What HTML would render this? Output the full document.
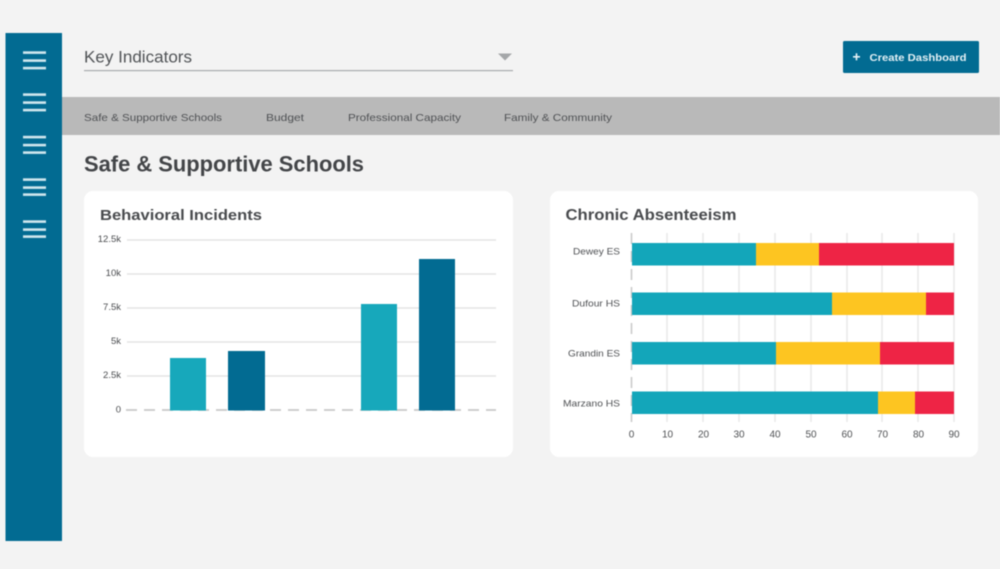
<!DOCTYPE html>
<html>
<head>
<meta charset="utf-8">
<style>
html,body{margin:0;padding:0;width:1000px;height:569px;overflow:hidden;background:#f3f3f3;}
svg{display:block;filter:blur(0.55px);}
text{font-family:"Liberation Sans",sans-serif;}
</style>
</head>
<body>
<svg xmlns="http://www.w3.org/2000/svg" width="1000" height="569" viewBox="0 0 1000 569">
<rect width="1000" height="569" fill="#f3f3f3"/>
<!-- sidebar -->
<rect x="5.5" y="33" width="56.5" height="508" fill="#026b92"/>
<g fill="#cfe6ee">
<rect x="23" y="51.3" width="23" height="2.6"/><rect x="23" y="59.3" width="23" height="2.6"/><rect x="23" y="66.8" width="23" height="2.6"/>
<rect x="23" y="93.3" width="23" height="2.6"/><rect x="23" y="101.3" width="23" height="2.6"/><rect x="23" y="108.8" width="23" height="2.6"/>
<rect x="23" y="135.8" width="23" height="2.6"/><rect x="23" y="143.8" width="23" height="2.6"/><rect x="23" y="151.3" width="23" height="2.6"/>
<rect x="23" y="178.3" width="23" height="2.6"/><rect x="23" y="186.3" width="23" height="2.6"/><rect x="23" y="193.3" width="23" height="2.6"/>
<rect x="23" y="220.3" width="23" height="2.6"/><rect x="23" y="228.3" width="23" height="2.6"/><rect x="23" y="235.3" width="23" height="2.6"/>
</g>
<!-- header -->
<text x="84" y="62.5" font-size="16.5" fill="#505356" textLength="108" lengthAdjust="spacingAndGlyphs">Key Indicators</text>
<rect x="84" y="70" width="429" height="1.2" fill="#a9abad"/>
<polygon points="498,53.5 512,53.5 505,60.5" fill="#a5a7a9"/>
<rect x="843" y="41" width="136" height="32" rx="1.5" fill="#026b92"/>
<rect x="853" y="56" width="7" height="1.6" fill="#e8f3f7"/><rect x="855.7" y="53.3" width="1.6" height="7" fill="#e8f3f7"/>
<text x="869.5" y="61" font-size="10.5" font-weight="bold" fill="#e4f0f5" textLength="97" lengthAdjust="spacingAndGlyphs">Create Dashboard</text>
<!-- tabs -->
<rect x="62" y="97" width="938" height="38" fill="#b9b9b9"/>
<g font-size="10.5" fill="#4f5154">
<text x="84" y="121" textLength="138" lengthAdjust="spacingAndGlyphs">Safe &amp; Supportive Schools</text>
<text x="266" y="121" textLength="38" lengthAdjust="spacingAndGlyphs">Budget</text>
<text x="348" y="121" textLength="113" lengthAdjust="spacingAndGlyphs">Professional Capacity</text>
<text x="504" y="121" textLength="108" lengthAdjust="spacingAndGlyphs">Family &amp; Community</text>
</g>
<text x="84" y="171.5" font-size="22" font-weight="bold" fill="#434548" textLength="280" lengthAdjust="spacingAndGlyphs">Safe &amp; Supportive Schools</text>
<!-- left card -->
<rect x="84" y="191" width="429" height="266" rx="9" fill="#fff"/>
<text x="100" y="220" font-size="15" font-weight="bold" fill="#494b4e" textLength="162" lengthAdjust="spacingAndGlyphs">Behavioral Incidents</text>
<g stroke="#e4e4e4" stroke-width="1.4">
<line x1="127" x2="496" y1="240" y2="240"/>
<line x1="127" x2="496" y1="274" y2="274"/>
<line x1="127" x2="496" y1="308" y2="308"/>
<line x1="127" x2="496" y1="342" y2="342"/>
<line x1="127" x2="496" y1="376" y2="376"/>
</g>
<line x1="126" x2="496" y1="410" y2="410" stroke="#c8c8c8" stroke-width="1.8" stroke-dasharray="11 7"/>
<g font-size="9.5" fill="#4a4c4f" text-anchor="end">
<text x="121" y="242">12.5k</text>
<text x="121" y="276">10k</text>
<text x="121" y="310">7.5k</text>
<text x="121" y="344">5k</text>
<text x="121" y="378">2.5k</text>
<text x="121" y="412.5">0</text>
</g>
<rect x="170" y="358" width="36" height="52.5" fill="#17a8bb"/>
<rect x="228" y="351" width="37" height="59.5" fill="#026b92"/>
<rect x="361" y="304" width="36" height="106.5" fill="#17a8bb"/>
<rect x="419" y="259" width="36" height="151.5" fill="#026b92"/>
<!-- right card -->
<rect x="550" y="191" width="428" height="266" rx="9" fill="#fff"/>
<text x="565.5" y="220" font-size="15.5" font-weight="bold" fill="#494b4e" textLength="171" lengthAdjust="spacingAndGlyphs">Chronic Absenteeism</text>
<g stroke="#e6e6e6" stroke-width="1.3">
<line x1="667" x2="667" y1="233" y2="422"/>
<line x1="703" x2="703" y1="233" y2="422"/>
<line x1="739" x2="739" y1="233" y2="422"/>
<line x1="775" x2="775" y1="233" y2="422"/>
<line x1="811" x2="811" y1="233" y2="422"/>
<line x1="847" x2="847" y1="233" y2="422"/>
<line x1="918" x2="918" y1="233" y2="422"/>
<line x1="882" x2="882" y1="233" y2="422"/>
<line x1="954" x2="954" y1="233" y2="422"/>
</g>
<line x1="631.5" x2="631.5" y1="233" y2="422" stroke="#c8c8c8" stroke-width="1.5" stroke-dasharray="11 7"/>
<rect x="632" y="243" width="124" height="22.5" fill="#13a6ba"/><rect x="756" y="243" width="63" height="22.5" fill="#fdc521"/><rect x="819" y="243" width="135" height="22.5" fill="#ee2445"/>
<rect x="632" y="292.5" width="200" height="22.5" fill="#13a6ba"/><rect x="832" y="292.5" width="94" height="22.5" fill="#fdc521"/><rect x="926" y="292.5" width="28" height="22.5" fill="#ee2445"/>
<rect x="632" y="342" width="144" height="22.5" fill="#13a6ba"/><rect x="776" y="342" width="104" height="22.5" fill="#fdc521"/><rect x="880" y="342" width="74" height="22.5" fill="#ee2445"/>
<rect x="632" y="391.5" width="246" height="22.5" fill="#13a6ba"/><rect x="878" y="391.5" width="37" height="22.5" fill="#fdc521"/><rect x="915" y="391.5" width="39" height="22.5" fill="#ee2445"/>
<g font-size="9.5" fill="#4f5154" text-anchor="end">
<text x="620" y="254.5" textLength="47" lengthAdjust="spacingAndGlyphs">Dewey ES</text>
<text x="620" y="306.5" textLength="48" lengthAdjust="spacingAndGlyphs">Dufour HS</text>
<text x="620" y="356.5" textLength="52" lengthAdjust="spacingAndGlyphs">Grandin ES</text>
<text x="620" y="406.5" textLength="57" lengthAdjust="spacingAndGlyphs">Marzano HS</text>
</g>
<g font-size="10" fill="#4f5154" text-anchor="middle">
<text x="631.5" y="437.5">0</text>
<text x="667.5" y="437.5">10</text>
<text x="703.5" y="437.5">20</text>
<text x="739" y="437.5">30</text>
<text x="775" y="437.5">40</text>
<text x="811" y="437.5">50</text>
<text x="847" y="437.5">60</text>
<text x="882.5" y="437.5">70</text>
<text x="918.5" y="437.5">80</text>
<text x="954" y="437.5">90</text>
</g>
</svg>
</body>
</html>
